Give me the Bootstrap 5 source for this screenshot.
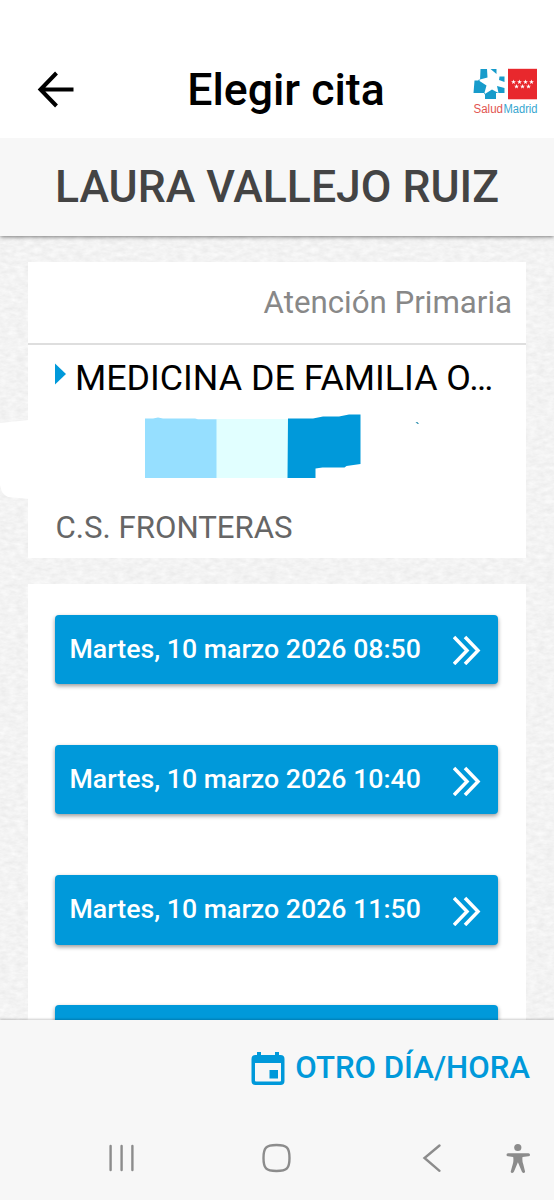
<!DOCTYPE html>
<html lang="es">
<head>
<meta charset="utf-8">
<meta name="viewport" content="width=device-width, initial-scale=1">
<title>Elegir cita</title>
<link href="https://cdn.jsdelivr.net/npm/bootstrap@5.3.0/dist/css/bootstrap.min.css" rel="stylesheet">
<style>
body{font-family:Roboto,sans-serif;background:#fff;color:#000}
svg{display:block;flex:none}
.app-screen{height:1200px;overflow:hidden}
.top-bar{height:138px;padding:41px 15px 0 32px}
.top-title{font-size:44.6px;font-weight:500;line-height:1;white-space:nowrap;padding:2px 0 0 19px}
.brand-text{font-family:"Liberation Sans",sans-serif}
.patient-bar{height:98px;background:#f7f7f7;box-shadow:0 1px 4px rgba(0,0,0,.5);clip-path:inset(0 0 -8px 0);z-index:2}
.patient-name{font-size:44.5px;font-weight:500;line-height:1;color:#444;white-space:nowrap}
.paper{background:#f2f2f2 url("data:image/svg+xml,%3Csvg xmlns='http://www.w3.org/2000/svg' width='277' height='277'%3E%3Cfilter id='n' x='0' y='0' width='100%25' height='100%25' color-interpolation-filters='sRGB'%3E%3CfeTurbulence type='fractalNoise' baseFrequency='.12 .24' numOctaves='3' seed='4' stitchTiles='stitch'/%3E%3CfeColorMatrix values='.08 0 0 0 .912 .08 0 0 0 .912 .08 0 0 0 .912 0 0 0 0 1'/%3E%3C/filter%3E%3Crect width='277' height='277' filter='url(%23n)'/%3E%3C/svg%3E");padding:26px 28px 0}
.service-card{height:296px}
.service-head{height:83px;border-bottom:2px solid #dedede;padding-right:14px;font-size:31.25px;line-height:81px;color:#888}
.service-name{padding:12px 20px 0 27px;height:67px}
.service-name .label-text{font-size:35.8px;line-height:42px;margin-left:8px;white-space:nowrap}
.scribble{left:-28px;top:149px}
.center-name{font-size:31.2px;line-height:36px;color:#666;padding-left:27.5px;margin-top:98px;white-space:nowrap}
.slots{margin-top:26px;padding:30.5px 28px 0 27px;height:460px}
.slot-btn{height:69.500px;margin-bottom:60.8px;background:#0099da;border:0;border-radius:4px;color:#fff;font-size:26.7px;font-weight:500;line-height:1;padding:0 13px 0 14.5px;box-shadow:0 2px 4px rgba(0,0,0,.4);white-space:nowrap;flex:none}
.slot-btn:hover{background:#0099da;color:#fff}
.action-bar{height:180px;background:#f7f7f7;box-shadow:0 -1px 2px rgba(0,0,0,.2);z-index:2}
.other-day{height:96px;padding-right:24px;color:#0099da;font-size:31.2px;font-weight:500;line-height:1;white-space:nowrap}
.other-day svg{margin-right:9px}
</style>
</head>
<body>
<div class="app-screen d-flex flex-column">
  <header class="top-bar d-flex align-items-center justify-content-between flex-shrink-0">
    <svg width="48" height="48" viewBox="0 0 48 48" fill="none" stroke="#000" stroke-width="4"><path d="M41.500 23.500H9M24.500 7 8.500 23.500l16 16.500"/></svg>
    <h1 class="top-title mb-0">Elegir cita</h1>
    <svg width="66" height="50" viewBox="0 -3 66 50">
      <defs><path id="st" d="M0-2.600.6-.8H2.500L1 .300 1.500 2.100 0 1-1.500 2.100-1 .300-2.500-.8H-.6z"/></defs>
      <path fill="#179bcb" d="M7.500 1H14L14.500 9.500 5 12 13.500 17.500 11 26.500 19 21.500 25.500 25 24 18 31.500 20V25H23V31H12V25H.500L1.500 12.500H7z"/>
      <path fill="#179bcb" d="M17.500 1H23.500V6zM26.500 8.500H31.500V14L26 12z"/>
      <path fill="#e8282d" d="M35 .8h29v30.500H35z"/>
      <g fill="#fff"><use href="#st" x="40.500" y="14"/><use href="#st" x="46.500" y="14"/><use href="#st" x="52.500" y="14"/><use href="#st" x="58.500" y="14"/><use href="#st" x="43.500" y="18.500"/><use href="#st" x="49.500" y="18.500"/><use href="#st" x="55.500" y="18.500"/></g>
      <text class="brand-text" x="0.500" y="45" font-size="12" fill="#e25450" textLength="29.500" lengthAdjust="spacingAndGlyphs">Salud</text>
      <text class="brand-text" x="30.500" y="45" font-size="12" fill="#36a6cf" textLength="34" lengthAdjust="spacingAndGlyphs">Madrid</text>
    </svg>
  </header>
  <div class="patient-bar d-flex align-items-center justify-content-center flex-shrink-0 position-relative">
    <h2 class="patient-name m-0">LAURA VALLEJO RUIZ</h2>
  </div>
  <main class="paper flex-grow-1 overflow-hidden">
    <section class="service-card bg-white position-relative">
      <div class="service-head text-end">Atención Primaria</div>
      <div class="service-name d-flex">
        <svg width="12" height="42" viewBox="0 0 12 42"><path fill="#0099da" d="M0 6.500 11 17 0 27.500z"/></svg>
        <span class="label-text">MEDICINA DE FAMILIA O…</span>
      </div>
      <svg class="scribble position-absolute" width="554" height="92" viewBox="0 411 554 92">
        <path fill="#fff" d="M0 423 29 420V499L8 497Q1 494 0 485z"/>
        <path fill="#96dfff" d="M145 418.500h8l5-1 5 1h32l3 .7h20V478h-73z"/>
        <path fill="#e1ffff" d="M216.500 419H289v59h-72.500z"/>
        <path fill="#0099da" d="M288 418.500h25l10-2h16l10-2h11.500V464l-14 2-2 1.500h-22l-7 1V478h-28z"/>
        <path fill="#3f9ab5" d="M415.500 422h2l1.500 2h-1.500z"/>
      </svg>
      <div class="center-name">C.S. FRONTERAS</div>
    </section>
    <section class="slots bg-white d-flex flex-column">
      <button class="slot-btn btn d-flex align-items-center justify-content-between"><span>Martes, 10 marzo 2026 08:50</span><svg width="32" height="32" viewBox="0 0 32 32" fill="none" stroke="#fff" stroke-width="3.500"><path d="M1 4l13 13.500L1 31M12 4l13 13.500L12 31"/></svg></button>
      <button class="slot-btn btn d-flex align-items-center justify-content-between"><span>Martes, 10 marzo 2026 10:40</span><svg width="32" height="32" viewBox="0 0 32 32" fill="none" stroke="#fff" stroke-width="3.500"><path d="M1 4l13 13.500L1 31M12 4l13 13.500L12 31"/></svg></button>
      <button class="slot-btn btn d-flex align-items-center justify-content-between"><span>Martes, 10 marzo 2026 11:50</span><svg width="32" height="32" viewBox="0 0 32 32" fill="none" stroke="#fff" stroke-width="3.500"><path d="M1 4l13 13.500L1 31M12 4l13 13.500L12 31"/></svg></button>
      <div class="slot-btn"></div>
    </section>
  </main>
  <footer class="action-bar flex-shrink-0 position-relative">
    <div class="other-day d-flex align-items-center justify-content-end">
      <svg width="40" height="40" viewBox="0 0 40 40" fill="#0099da"><path fill-rule="evenodd" d="M11 4h4v3h14V4h4v3h1.500q4 0 4 4v22q0 4-4 4h-25q-4 0-4-4V11q0-4 4-4H11zM9 15v17.500q0 1 1 1h24q1 0 1-1V15zM23.500 22h8.500v8.500h-8.500z"/></svg>
      <span>OTRO DÍA/HORA</span>
    </div>
    <svg width="554" height="84" viewBox="0 1116 554 84" fill="none" stroke="#8c8c8c" stroke-width="2.400" stroke-linecap="round">
      <path d="M110.600 1146v24M121.600 1146v24M132.400 1146v24"/>
      <path d="M276.500 1145c10.500 0 13 2.500 13 13s-2.500 13-13 13-13-2.500-13-13 2.500-13 13-13z"/>
      <path d="M439.500 1145.500 424.500 1158l15 12.800"/>
      <g fill="#8c8c8c" stroke="none"><circle cx="517.800" cy="1147.500" r="3.600"/><path d="M508 1153.200h20.500q1.500 0 1.500 1.500t-1.500 1.600l-6 .7q-.5 4 .7 7l1.800 7.200q.3 1.500-1.200 1.700-1.400.2-1.900-1.100l-4-9.500-4 9.500q-.5 1.300-2 1.100-1.500-.2-1.100-1.700l2-7.200q1-3 .4-7l-5.200-.7q-1.500-.1-1.500-1.600t1.500-1.500z"/></g>
    </svg>
  </footer>
</div>
<script src="https://cdn.jsdelivr.net/npm/bootstrap@5.3.0/dist/js/bootstrap.bundle.min.js"></script>
</body>
</html>
